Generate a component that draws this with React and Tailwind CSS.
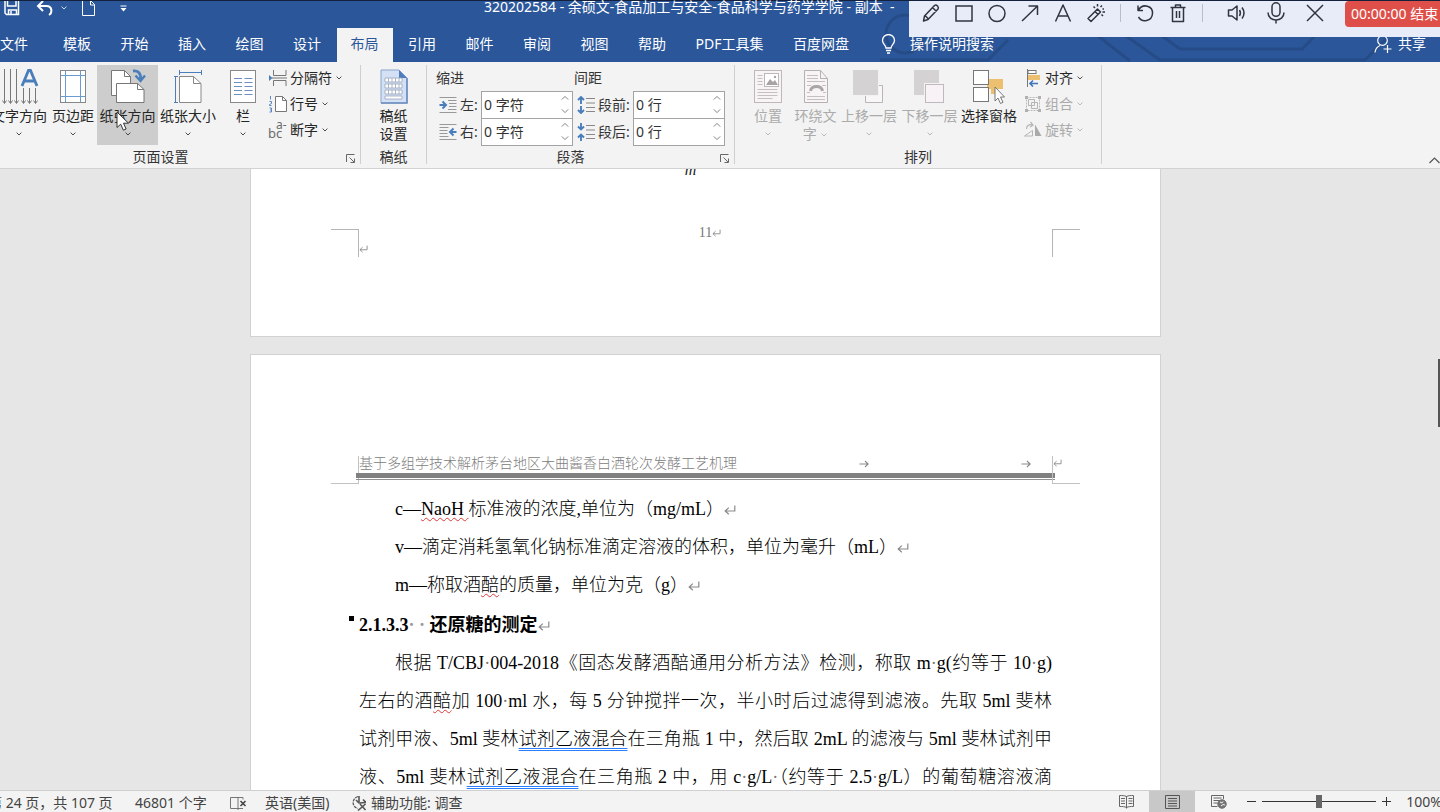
import React from "react";

/* ---------- small glyphs ---------- */

const Chevron = ({ up = false, className = "" }) => (
  <svg width="8" height="6" viewBox="0 0 8 6" className={className} fill="none" stroke="currentColor" strokeWidth="1" opacity="0.8" aria-hidden="true">
    <path d={up ? "M0.8 4.6 4 1.4 7.2 4.6" : "M1.6 1.6 4 4 6.4 1.6"} />
  </svg>
);

const Return = ({ small = false }) => (
  <svg width={small ? 9 : 12} height={small ? 8 : 10} viewBox="0 0 12 10" className="inline-block align-baseline" fill="none" stroke="#8a8a8a" strokeWidth="1.2" aria-hidden="true">
    <path d="M10.8 0.5V6H1.5M4.8 2.6 1.2 6 4.8 9.2" />
  </svg>
);

const TabMark = () => (
  <svg width="10" height="8" viewBox="0 0 10 8" fill="none" stroke="#8a8a8a" strokeWidth="1.1" aria-hidden="true">
    <path d="M0.5 4H9M6 1 9.2 4 6 7" />
  </svg>
);

const Cursor = ({ className = "" }) => (
  <svg width="14" height="20" viewBox="0 0 14 20" className={className} aria-hidden="true">
    <path d="M1 1v15.5l3.7-3.3 2.7 6 2.7-1.2-2.6-5.8h5z" fill="#fff" stroke="#333" strokeWidth="1" />
  </svg>
);

const Launcher = () => (
  <button aria-label="对话框启动器" className="text-[#666]">
    <svg width="10" height="10" viewBox="0 0 10 10" fill="none" stroke="currentColor">
      <path d="M0.5 8V0.5H8.5M3.5 3.5 8 8M8.5 4.5V8.5H4.5" />
    </svg>
  </button>
);

/* ---------- large ribbon icons, drawn on a 36 x 36 box ---------- */

const Icon36 = ({ children }) => (
  <svg width="36" height="36" viewBox="0 0 36 36" fill="none" className="shrink-0" aria-hidden="true">
    {children}
  </svg>
);

const TextDirectionIcon = () => (
  <svg width="40" height="36" viewBox="0 0 40 36" fill="none" className="shrink-0" aria-hidden="true">
    <path d="M5.5 1v34M11.5 1v34M17.5 1v34M24.5 20v15M30.5 20v15M36.5 20v15" stroke="#777" />
    <path d="M3.5 32.5l2 3 2-3M9.5 32.5l2 3 2-3M15.5 32.5l2 3 2-3M22.5 32.5l2 3 2-3M28.5 32.5l2 3 2-3M34.5 32.5l2 3 2-3" stroke="#777" />
    <path d="M23 18 29.5 2.5h2L38 18M25.5 13h10" stroke="#4a7ebb" strokeWidth="2.8" />
  </svg>
);

const MarginsIcon = () => (
  <Icon36>
    <rect x="5.5" y="2.5" width="25" height="32" fill="#fff" stroke="#888" />
    <path d="M10.5 3v31M25.5 3v31M6 7.5h24M6 28.5h24" stroke="#6a9bd1" />
  </Icon36>
);

const OrientationIcon = () => (
  <Icon36>
    <path d="M1.5 2.5h13l6 6v19h-19z" fill="#fff" stroke="#777" />
    <path d="M14.5 2.5v6h6" stroke="#777" />
    <path d="M6.5 15.5h21l6.500 6v13h-27.500z" fill="#fff" stroke="#777" />
    <path d="M27.500 15.500v6h6.500" stroke="#777" />
    <path d="M23 3c5-.5 8 2 7.500 8" stroke="#4a7ebb" strokeWidth="2.8" />
    <path d="M25.500 7.500 30.500 13l4.500-5.500" stroke="#4a7ebb" strokeWidth="2.400" />
  </Icon36>
);

const SizeIcon = () => (
  <Icon36>
    <path d="M9.500 8.500h14l7.500 7v19H9.500z" fill="#fff" stroke="#888" />
    <path d="M23.500 8.500v7H31" stroke="#888" />
    <path d="M9 4.500h22M9.500 2v5M31.500 2v5M5.500 8.500v26M4 8.500h4M4 34.500h4" stroke="#4a7ebb" />
  </Icon36>
);

const ColumnsIcon = () => (
  <Icon36>
    <rect x="5.500" y="2.500" width="25" height="32" fill="#fff" stroke="#888" />
    <path d="M9 10.500h8M9 14.500h8M9 18.500h8M9 22.500h8M9 26.500h8M19.500 10.500h8M19.500 14.500h8M19.500 18.500h8M19.500 22.500h8M19.500 26.500h8" stroke="#6a8fc0" />
  </Icon36>
);

const GridPaperIcon = () => (
  <Icon36>
    <path d="M5 2h18l8 8v25H5z" fill="#d3e0f5" stroke="#8ba3cb" />
    <path d="M31 10v25H5" stroke="#6d8cc0" strokeWidth="1.600" />
    <path d="M23 2v8h8z" fill="#4f7dbf" />
    <g fill="#fff" stroke="#9aa5b8" strokeWidth="0.800">
      <path d="M9 10h17v4H9zM9 16h17v4H9zM9 22h17v4H9zM9 28h17v3H9z" />
      <path d="M12.500 10v4M16 10v4M19.500 10v4M23 10v4M12.500 16v4M16 16v4M19.500 16v4M23 16v4M12.500 22v4M16 22v4M19.500 22v4M23 22v4" />
    </g>
  </Icon36>
);

const PositionIcon = () => (
  <Icon36>
    <rect x="4.500" y="2.500" width="27" height="32" fill="#f8f4f6" stroke="#bdb9bb" />
    <path d="M7.500 7.500h5M7.500 10.500h5M7.500 13.500h5M7.500 16.500h5M7.500 21.500h20M7.500 24.500h20M7.500 27.500h20M7.500 30.500h15" stroke="#c4c0c2" />
    <rect x="14.500" y="5.500" width="14" height="13" fill="#fff" stroke="#bdb9bb" />
    <path d="M16 17l4-6 3 3 2-2 3 5z" fill="#a8a4a6" />
    <circle cx="25" cy="9" r="1.200" fill="#a8a4a6" />
  </Icon36>
);

const WrapIcon = () => (
  <Icon36>
    <path d="M6.500 2.500h16l7 8v24h-23z" fill="#f8f4f6" stroke="#b5b1b3" />
    <path d="M22.500 2.500v8h7" stroke="#b5b1b3" />
    <path d="M9 7.500h11M9 10.500h11M9 13.500h18M9 17.500h4M24 17.500h4M9 28.500h18M9 31.500h18M9 24.500h3M25 24.500h3" stroke="#c4c0c2" />
    <path d="M12.500 23c1-6 11-6 12 0" stroke="#aaa6a8" strokeWidth="3" />
  </Icon36>
);

const ForwardIcon = () => (
  <Icon36>
    <path d="M14.500 17.500h17v17h-17z" fill="#f8f6f7" stroke="#b9b5b7" />
    <rect x="2" y="2" width="26" height="26" fill="#f3f3f3" />
    <rect x="2" y="2" width="25" height="25" fill="#d4d2d3" />
  </Icon36>
);

const BackwardIcon = () => (
  <Icon36>
    <rect x="2" y="2" width="25" height="25" fill="#d4d2d3" />
    <rect x="12" y="15" width="20" height="20" fill="#f3f3f3" />
    <rect x="13.500" y="16.500" width="18" height="18" fill="#f8f1f5" stroke="#bfb9bd" />
  </Icon36>
);

const SelectionPaneIcon = () => (
  <Icon36>
    <path d="M16 11h16v10h-5v5h-7v-5h-4z" fill="#ecc06e" />
    <rect x="2.500" y="2.500" width="15" height="14" fill="#fff" stroke="#777" />
    <rect x="2.500" y="19.500" width="15" height="14" fill="#fff" stroke="#777" />
    <path d="M24 19v14l3-3 2.500 5.500 2.500-1.200-2.500-5.300h4z" fill="#fff" stroke="#777" />
  </Icon36>
);

/* ---------- small ribbon icons, drawn on an 18 x 18 box ---------- */

const Icon18 = ({ children }) => (
  <svg width="18" height="18" viewBox="0 0 18 18" fill="none" className="shrink-0" aria-hidden="true">
    {children}
  </svg>
);

const BreaksIcon = () => (
  <Icon18>
    <path d="M0 6v6l3.500-3z" fill="#4a7ebb" />
    <path d="M3 9h15M4.500 1v5.500h12.500V1M4.500 17v-5.500h12.500V17" stroke="#777" />
  </Icon18>
);

const LineNumbersIcon = () => (
  <Icon18>
    <path d="M6.500 1.500h7l4 4v11h-11z" fill="#fff" stroke="#777" />
    <path d="M13.500 1.500v4h4" stroke="#777" />
    <path d="M1.500 1v3.500M0.500 6.500h2v2l-2 1v1h2M0.500 13h2v4h-2M1 15h1.500" stroke="#4a7ebb" strokeWidth="0.900" />
  </Icon18>
);

const HyphenIcon = () => (
  <svg width="18" height="18" viewBox="0 0 18 18" className="shrink-0 overflow-visible" aria-hidden="true" fill="#6b6b6b" fontSize="13">
    <text x="-1" y="17">bc</text>
    <text x="7" y="8" fontSize="12">a-</text>
  </svg>
);

const IndentIcon = ({ right = false }) => (
  <Icon18>
    <path d="M0.500 1.500h17M0.500 16.500h17" stroke="#999" />
    <path d={right ? "M0.500 4.500h9M0.500 7.500h8M0.500 10.500h8M0.500 13.500h9" : "M9 4.500h8.500M10 7.500h7.500M10 10.500h7.500M9 13.500h8.500"} stroke="#999" />
    <path d={right ? "M17.500 9h-6M14.500 5.500 11 9l3.500 3.500" : "M0.500 9h6M3.500 5.500 7 9l-3.500 3.500"} stroke="#4a7ebb" strokeWidth="2" />
  </Icon18>
);

const SpacingIcon = ({ after = false }) => (
  <Icon18>
    <path d="M9 2.500h9M9 7h9M9 11.500h9M9 15.500h9" stroke="#888" />
    <path d={after ? "M4 0v6M1 3.500l3 3 3-3M4 18v-6M1 14.500l3-3 3 3" : "M4 8V1.500M1 4l3-3 3 3M4 10v6.500M1 14l3 3 3-3"} stroke="#4a7ebb" strokeWidth="1.900" />
  </Icon18>
);

const AlignIcon = () => (
  <Icon18>
    <path d="M3.500 0v18" stroke="#777" />
    <rect x="4" y="1.500" width="8" height="3" fill="#fff" stroke="#777" />
    <rect x="4" y="6" width="12" height="5" fill="#ecc06e" />
    <path d="M14 14.500H6M9 11.500l-3 3 3 3" stroke="#3f76ba" strokeWidth="1.600" />
  </Icon18>
);

const GroupIcon = () => (
  <Icon18>
    <rect x="2.500" y="2.500" width="13" height="13" stroke="#bbb" strokeDasharray="2 1" />
    <path d="M4.500 4.500h6v6h-6zM7.500 7.500h6v6h-6z" stroke="#b5b5b5" />
    <path d="M1 1h3v3H1zM14 1h3v3h-3zM1 14h3v3H1zM14 14h3v3h-3z" fill="#b0b0b0" />
  </Icon18>
);

const RotateIcon = () => (
  <Icon18>
    <path d="M11 3.500V15h6.500z" fill="#aaa" />
    <path d="M8.500 9.500V15H0.500z" fill="#f5f5f5" stroke="#b5b5b5" />
    <path d="M2.500 8c0-4 3-5 6-4M6.500 1l2.500 3-3 2" stroke="#b5b5b5" strokeWidth="1.200" />
  </Icon18>
);

/* ---------- ribbon parts ---------- */

const BigButton = ({ icon, label, width, active, disabled, arrow = true, children }) => (
  <button
    disabled={disabled}
    className={`relative flex h-20 shrink-0 flex-col items-center pt-[3px] ${width} ${active ? "bg-[#cdcdcd]" : ""} ${disabled ? "text-[#ababab]" : "text-[#262626]"}`}
  >
    {icon}
    <span className="mt-[3px] leading-[18px] whitespace-nowrap">{label}</span>
    {arrow && <Chevron className="mt-1.5" />}
    {children}
  </button>
);

const SmallButton = ({ icon, label, disabled }) => (
  <button disabled={disabled} className={`flex h-[26px] items-center gap-[3px] whitespace-nowrap ${disabled ? "text-[#ababab]" : "text-[#262626]"}`}>
    {icon}
    <span>{label}</span>
    <Chevron />
  </button>
);

const Spinner = ({ id, icon, label, value }) => (
  <div className="flex h-[27px] items-center">
    {icon}
    <label htmlFor={id} className="ml-[3px] flex-1 whitespace-nowrap">{label}</label>
    <div className="flex h-[28px] w-[92px] border border-[#a3a3a3] bg-white">
      <input id={id} defaultValue={value} className="w-[76px] min-w-0 bg-transparent pl-0.5 outline-none" />
      <div className="flex flex-1 flex-col items-center justify-around text-[#666]">
        <button aria-label={`${label}增加`} className="flex"><Chevron up /></button>
        <button aria-label={`${label}减少`} className="flex rotate-180"><Chevron up /></button>
      </div>
    </div>
  </div>
);

const Group = ({ title, width, launcher, pad = "", titlePad = "", children }) => (
  <section className={`flex shrink-0 flex-col border-r border-[#cfcfcf] ${width}`}>
    <div className={`flex h-[84px] ${pad}`}>{children}</div>
    <div className={`relative flex h-4 items-center justify-center pt-0.5 text-[#333] ${titlePad}`}>
      <span>{title}</span>
      {launcher && <span className="absolute right-1 bottom-0 flex"><Launcher /></span>}
    </div>
  </section>
);

/* ---------- title bar and floating annotation bar ---------- */

const Tool = ({ label, children }) => (
  <button aria-label={label} className="flex text-[#2f3440]">
    <svg width="22" height="22" viewBox="0 0 22 22" fill="none" stroke="currentColor" strokeWidth="1.500" strokeLinejoin="round">
      {children}
    </svg>
  </button>
);

const AnnotationBar = () => (
  <div className="absolute top-px right-0 z-10 flex h-9 w-[531px] items-start bg-[#e8ecf8] text-sm">
    <div className="flex h-6 flex-1 items-center gap-[11px] pl-[11px]">
      <Tool label="画笔"><path d="M3.500 19l1-5L14.500 3.500q1.500-1 3 .5t.5 3L8 17.500zM12.500 5.500l4 4M5 13.500l3.500 3.500" /></Tool>
      <Tool label="矩形"><rect x="3" y="4" width="16" height="15" strokeLinejoin="miter" /></Tool>
      <Tool label="椭圆"><circle cx="11" cy="11.500" r="8" /></Tool>
      <Tool label="箭头"><path d="M3 19 18.500 4M9.500 4h9v9" /></Tool>
      <Tool label="文字"><path d="M3.500 19.500 11 3l7.500 16.500M6 14h10" /></Tool>
      <Tool label="魔棒"><path d="M3 16.500 12.500 7l3 3L6 19.500zM10 9.500l3 3M12.500 2v2.500M17 3.500 15.500 5M20 10h-2.500M18 14l-1.500-1.500M8.500 4.500 10 6M17.500 7h1.500" /></Tool>
      <span className="mx-0.5 h-[18px] w-px bg-[#b9bdc8]" />
      <Tool label="撤销"><path d="M4 3.500v5h5M4 8.500C9 .5 19 4 18.500 11.500c-.5 8-10.500 9.500-14 3.500" /></Tool>
      <Tool label="删除"><path d="M3.500 5.500h15M8.500 5V3h5v2M5.500 5.500v14h11v-14M9.500 9v7M12.500 9v7" /></Tool>
      <span className="mx-0.5 h-[18px] w-px bg-[#b9bdc8]" />
      <div className="ml-2.5 flex gap-[17px]">
        <Tool label="声音"><path d="M2.500 8h3.500l5-4v14l-5-4H2.500zM13.500 8q1.800 3 0 6M16 5.500q4 5.500 0 11" /></Tool>
        <Tool label="麦克风"><rect x="7" y="0.800" width="8" height="13.500" rx="4" /><path d="M3 10.500c0 10 16 10 16 0M11 18v3.500" /></Tool>
        <Tool label="关闭"><path d="M3 3l16 16M19 3 3 19" /></Tool>
      </div>
    </div>
    <button className="h-[26px] w-[95px] rounded-l bg-[#df4f49] pl-1.5 text-left whitespace-nowrap text-white">
      00:00:00 结束
    </button>
  </div>
);

const TitleBar = () => (
  <div className="flex h-7 items-start border-t border-[#14213d] text-white">
    <div className="flex w-1/3 shrink-0 items-start">
      <button aria-label="保存" className="ml-1">
        <svg width="16" height="15" viewBox="0 0 16 15" fill="none" stroke="#fff" strokeWidth="1.500">
          <path d="M1 0v12l1.500 1.500h12V0M3.500 0v5h8.500V0M4.500 13.500V9h8v4.500M7 10v3" />
        </svg>
      </button>
      <button aria-label="撤消" className="ml-4">
        <svg width="18" height="15" viewBox="0 0 18 15" fill="none" stroke="#fff" strokeWidth="2">
          <path d="M7 0 2 5l5 5M2.500 5h8c6 0 6 7 2.500 9" />
        </svg>
      </button>
      <Chevron className="mt-1 ml-1.5" />
      <button aria-label="新建" className="ml-3.5">
        <svg width="14" height="15" viewBox="0 0 14 15" fill="none" stroke="#fff">
          <path d="M0.500 0v14.500h12V3.500L9 0M8.500 0v4h4" />
        </svg>
      </button>
      <button aria-label="自定义快速访问工具栏" className="mt-1 ml-6">
        <svg width="7" height="8" viewBox="0 0 7 8" fill="#fff"><path d="M0.500 0.500h6v1h-6zM0.500 3h6l-3 3.500z" /></svg>
      </button>
    </div>
    <h1 className="pl-1 text-sm leading-3 whitespace-pre">320202584 - 余硕文-食品加工与安全-食品科学与药学学院 - 副本  -</h1>
  </div>
);

const tabs = ["模板", "开始", "插入", "绘图", "设计", "布局", "引用", "邮件", "审阅", "视图", "帮助", "PDF工具集", "百度网盘"];

const TabRow = () => (
  <nav className="flex h-[34px] items-stretch text-sm whitespace-nowrap text-white">
    <a href="#file" className="flex w-[49px] items-center pb-0.5">文件</a>
    <div className="flex w-[814px] justify-between">
      {tabs.map((t) => (
        <a
          key={t}
          href="#tab"
          aria-current={t === "布局" ? "page" : undefined}
          className={`flex items-center px-3.5 pb-0.5 ${t === "布局" ? "bg-[#f3f3f3] text-[#2b579a]" : ""}`}
        >
          {t}
        </a>
      ))}
    </div>
    <button className="ml-[18px] flex items-center gap-3.5 pb-0.5">
      <svg width="15" height="20" viewBox="0 0 15 20" fill="none" stroke="#fff" strokeWidth="1.300">
        <path d="M5 14c0-3-3.500-4-3.500-7.500a6 6 0 0 1 12 0C13.500 10 10 11 10 14zM5 16.500h5M6 19h3" />
      </svg>
      操作说明搜索
    </button>
    <button className="mr-3.5 ml-auto flex items-center gap-1.5 pb-0.5">
      <svg width="18" height="18" viewBox="0 0 18 18" fill="none" stroke="#fff" strokeWidth="1.200">
        <circle cx="8.500" cy="5.500" r="4.800" />
        <path d="M1 17.500c.5-4 2.500-6 5-7M13.500 10v8M9.500 14h8" />
      </svg>
      共享
    </button>
  </nav>
);

const Circuit = () => (
  <svg className="absolute right-0 bottom-0" width="560" height="62" viewBox="0 0 560 62" fill="none" stroke="#264c87" strokeWidth="3" aria-hidden="true">
    <circle cx="25" cy="34" r="19" />
    <path d="M-10 60h118l20-20M218 36l32 25M246 36l34 24h205l22-22M282 36l18 13h122l12-12" />
  </svg>
);

/* ---------- document ---------- */

const Typo = ({ children }) => <span className="underline decoration-[#e03a3a] decoration-wavy decoration-1 underline-offset-2">{children}</span>;
const Grammar = ({ children }) => <span className="underline decoration-blue-500 decoration-double decoration-1 underline-offset-3">{children}</span>;
const Line = ({ indent, children }) => (
  <span className={`block whitespace-nowrap [text-align-last:justify] ${indent ? "pl-9" : ""}`}>{children}</span>
);
const Dot = () => <span className="text-[#777]">·</span>;

const Document = () => (
  <main className="relative flex min-h-0 flex-1 flex-col items-center gap-[17px] overflow-hidden bg-[#e6e6e6] pr-[29px] font-['Liberation_Serif','Noto_Sans_CJK_SC',serif]">
    <article className="h-[168px] w-[911px] shrink-0 border border-t-0 border-[#d2d2d2] bg-white px-20 text-[#777]">
      <div className="flex h-[60px] justify-center pr-[30px] text-base leading-[2px] text-[#222] italic">m</div>
      <div className="flex justify-between">
        <div className="flex">
          <span className="h-7 w-7 border-t border-r border-[#b5b5b5]" />
          <span className="flex pt-4"><Return small /></span>
        </div>
        <p className="text-sm leading-2">11<Return small /></p>
        <span className="h-7 w-7 border-t border-l border-[#b5b5b5]" />
      </div>
    </article>

    <article className="h-[900px] w-[911px] shrink-0 border border-[#d2d2d2] bg-white px-20 pt-[101px] text-black">
      <header className="relative flex h-7 justify-between">
        <span className="h-7 w-7 border-r border-b border-[#c2c2c2]" />
        <div className="-mx-[3px] flex-1">
          <div className="flex h-4 items-center pl-[3px] text-sm leading-4 whitespace-nowrap text-[#808080]">
            <span className="w-[500px] font-light">基于多组学技术解析茅台地区大曲酱香白酒轮次发酵工艺机理</span>
            <span className="w-[162px]"><TabMark /></span>
            <TabMark />
          </div>
          <div className="mt-px h-[5px] bg-[#808080]" />
          <div className="mt-px h-px bg-[#909090]" />
        </div>
        <span className="h-7 w-7 border-b border-l border-[#c2c2c2] leading-3"><Return small /></span>
      </header>

      <div className="px-7 pt-[6px] text-lg leading-[38px] font-light">
        <p className="pl-9">c—<Typo>NaoH </Typo>标准液的浓度,单位为（mg/mL）<Return /></p>
        <p className="pl-9">v—滴定消耗氢氧化钠标准滴定溶液的体积，单位为毫升（mL）<Return /></p>
        <p className="pl-9">m—称取酒<Typo>醅</Typo>的质量，单位为克（g）<Return /></p>
        <h2 className="relative pt-0.5 leading-[38px] font-bold">
          <span className="absolute top-3 -left-2.5 size-[5px] bg-black" />
          2.1.3.3<span className="text-[#999]">·&nbsp;·&nbsp;</span>还原糖的测定<Return />
        </h2>
        <p>
          <Line indent>根据 T/CBJ<Dot />004-2018《固态发酵酒醅通用分析方法》检测，称取 m<Dot />g(约等于 10<Dot />g)</Line>
          <Line>左右的酒<Typo>醅</Typo>加 100<Dot />ml 水，每 5 分钟搅拌一次，半小时后过滤得到滤液。先取 5ml 斐林</Line>
          <Line>试剂甲液、5ml 斐林<Grammar>试剂乙液混合</Grammar>在三角瓶 1 中，然后取 2mL 的滤液与 5ml 斐林试剂甲</Line>
          <Line>液、5ml 斐林<Grammar>试剂乙液混合</Grammar>在三角瓶 2 中，用 c<Dot />g/L<Dot />（约等于 2.5<Dot />g/L）的葡萄糖溶液滴</Line>
        </p>
      </div>
    </article>
    <span className="absolute top-[190px] right-0 h-[68px] w-0.5 bg-[#555]" />
  </main>
);

/* ---------- status bar ---------- */

const StatusBar = () => (
  <footer className="flex h-[22px] shrink-0 items-center overflow-hidden border-t border-[#d0d0d0] bg-[#f3f3f3] pt-0.5 text-sm leading-5 whitespace-nowrap text-[#444]">
    <span className="-ml-3 w-[147px]">第 24 页，共 107 页</span>
    <span className="w-[95px]">46801 个字</span>
    <button aria-label="校对" className="w-[35px]">
      <svg width="17" height="14" viewBox="0 0 17 14" fill="none" stroke="#777">
        <path d="M8 1.500H0.500v11H8zM8 1.500h5v2M8 12.500h5M8 12.500v1.500" />
        <path d="M10.500 5 15.500 10M15.500 5l-5 5" stroke="#444" strokeWidth="1.600" />
      </svg>
    </button>
    <button className="w-[87px] text-left">英语(美国)</button>
    <button className="flex items-center gap-1">
      <svg width="15" height="16" viewBox="0 0 15 16" fill="none" stroke="#555" strokeWidth="1.300">
        <path d="M6 1.500C-.5 3.500-.5 12 6 13.500" strokeDasharray="3 1" />
        <path d="M7 1v6M4 5l3 3 7-.5M8 9l5.500 6M13.500 9 6 15.500M11 4.500l2.500 2.500" strokeWidth="1.600" />
      </svg>
      辅助功能: 调查
    </button>
    <div className="-mt-0.5 ml-auto flex h-[22px] items-center">
      <button aria-label="阅读视图" className="mr-3.5 flex">
        <svg width="16" height="15" viewBox="0 0 16 15" fill="none" stroke="#666">
          <path d="M7.500 2v12.500M7.500 2.500c-2-1-4-1-7-1v11c3 0 5 0 7 1 2-1 4-1 7-1v-11c-3 0-5 0-7 1zM2 4.500h4M2 7h4M2 9.500h4M9.500 4.500h4M9.500 7h4M9.500 9.500h4" />
        </svg>
      </button>
      <button aria-label="页面视图" className="flex h-[22px] w-[46px] items-center justify-center bg-[#c8c8c8]">
        <svg width="15" height="14" viewBox="0 0 15 14" fill="none" stroke="#555">
          <path d="M0.500 0.500h14v13H0.500zM3 3.500h9M3 6h9M3 8.500h9M3 11h9" />
        </svg>
      </button>
      <button aria-label="Web 版式视图" className="ml-4 flex">
        <svg width="16" height="15" viewBox="0 0 16 15" fill="none" stroke="#666">
          <path d="M12.500 5V1.500H0.500v11h6M2.500 4h8M2.500 6.500h6M2.500 9h4" />
          <circle cx="11" cy="10" r="4.200" fill="#777" />
          <path d="M9 8l2 1 1-1.500M10 12l2-1.500 2 .5" stroke="#eee" />
        </svg>
      </button>
      <button aria-label="缩小" className="ml-5 h-px w-[9px] bg-[#333]" />
      <div className="relative ml-1.5 flex h-[22px] w-[114px] items-center">
        <input
          type="range"
          aria-label="显示比例"
          defaultValue="50"
          className="h-[13px] w-full appearance-none bg-[linear-gradient(#333,#333)] bg-[length:100%_1px] bg-center bg-no-repeat [&::-webkit-slider-thumb]:h-[13px] [&::-webkit-slider-thumb]:w-1.5 [&::-webkit-slider-thumb]:appearance-none [&::-webkit-slider-thumb]:bg-[#666]"
        />
      </div>
      <button aria-label="放大" className="ml-1.5 flex">
        <svg width="9" height="9" viewBox="0 0 9 9" stroke="#333"><path d="M0 4.500h9M4.500 0v9" /></svg>
      </button>
      <span className="-mr-0.5 ml-[15px]">100%</span>
    </div>
  </footer>
);

export default function App() {
  return (
    <div className="flex h-screen flex-col overflow-hidden bg-[#f3f3f3] font-['Noto_Sans','Noto_Sans_CJK_SC',sans-serif]">
      <header className="relative shrink-0 bg-[#2b579a]">
        <Circuit />
        <div className="relative">
          <TitleBar />
          <TabRow />
        </div>
        <AnnotationBar />
      </header>

      <div className="relative flex h-[107px] shrink-0 border-b border-[#d2d2d2] bg-[#f3f3f3] pt-[3px] pb-[4px] text-sm text-[#333]">
        <Group title="页面设置" width="w-[372px] -ml-[11px]" titlePad="pr-7" launcher>
          <BigButton icon={<TextDirectionIcon />} label="文字方向" width="w-[60px]" />
          <BigButton icon={<MarginsIcon />} label="页边距" width="w-[48px]" />
          <BigButton icon={<OrientationIcon />} label="纸张方向" width="w-[61px]" active>
            <Cursor className="absolute top-[46px] left-[19px]" />
          </BigButton>
          <BigButton icon={<SizeIcon />} label="纸张大小" width="w-[60px]" />
          <BigButton icon={<ColumnsIcon />} label="栏" width="w-[50px]" />
          <div className="ml-px flex flex-col">
            <SmallButton icon={<BreaksIcon />} label="分隔符" />
            <SmallButton icon={<LineNumbersIcon />} label="行号" />
            <SmallButton icon={<HyphenIcon />} label="断字" />
          </div>
        </Group>

        <Group title="稿纸" width="w-[66px]" pad="justify-center">
          <BigButton icon={<GridPaperIcon />} label={<>稿纸<br />设置</>} width="w-12" arrow={false} />
        </Group>

        <Group title="段落" width="w-[308px]" launcher pad="gap-1 pl-3" titlePad="pr-5">
          <div className="w-[134px]">
            <div className="-ml-[3px] h-[26px] leading-[26px]">缩进</div>
            <Spinner id="indent-left" icon={<IndentIcon />} label="左:" value="0 字符" />
            <Spinner id="indent-right" icon={<IndentIcon right />} label="右:" value="0 字符" />
          </div>
          <div className="w-[148px]">
            <div className="-ml-[3px] h-[26px] leading-[26px]">间距</div>
            <Spinner id="space-before" icon={<SpacingIcon />} label="段前:" value="0 行" />
            <Spinner id="space-after" icon={<SpacingIcon after />} label="段后:" value="0 行" />
          </div>
        </Group>

        <Group title="排列" width="w-[367px]" pad="pl-[7px]">
          <BigButton icon={<PositionIcon />} label="位置" width="w-[52px]" disabled />
          <BigButton
            icon={<WrapIcon />}
            label={<>环绕文<br />字 <Chevron className="inline-block" /></>}
            width="w-[43px]"
            arrow={false}
            disabled
          />
          <BigButton icon={<ForwardIcon />} label="上移一层" width="w-[64px]" disabled />
          <BigButton icon={<BackwardIcon />} label="下移一层" width="w-[57px]" disabled />
          <BigButton icon={<SelectionPaneIcon />} label="选择窗格" width="w-[62px]" arrow={false} />
          <div className="ml-1 flex flex-col">
            <SmallButton icon={<AlignIcon />} label="对齐" />
            <SmallButton icon={<GroupIcon />} label="组合" disabled />
            <SmallButton icon={<RotateIcon />} label="旋转" disabled />
          </div>
        </Group>

        <button aria-label="折叠功能区" className="ml-auto self-end">
          <svg width="11" height="7" viewBox="0 0 11 7" fill="none" stroke="#555" strokeWidth="1.200"><path d="M0.500 6 5.500 1l5 5" /></svg>
        </button>
      </div>

      <Document />
      <StatusBar />
    </div>
  );
}
